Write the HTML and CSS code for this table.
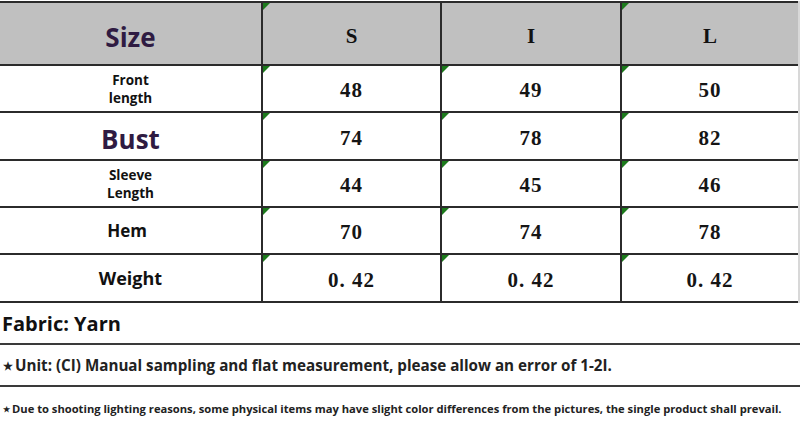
FILE: index.html
```html
<!DOCTYPE html>
<html>
<head>
<meta charset="utf-8">
<link rel="stylesheet" href="styles.css">
</head>
<body>
<div class="chart">
  <div class="cell head label"><span class="big size">Size</span></div>
  <div class="cell head mark"><span class="sz">S</span></div>
  <div class="cell head"><span class="sz">I</span></div>
  <div class="cell head mark"><span class="sz">L</span></div>

  <div class="cell label"><span class="small">Front<br>length</span></div>
  <div class="cell num mark">48</div>
  <div class="cell num mark">49</div>
  <div class="cell num mark">50</div>

  <div class="cell label"><span class="big bust">Bust</span></div>
  <div class="cell num mark">74</div>
  <div class="cell num mark">78</div>
  <div class="cell num mark">82</div>

  <div class="cell label"><span class="small">Sleeve<br>Length</span></div>
  <div class="cell num mark">44</div>
  <div class="cell num mark">45</div>
  <div class="cell num mark">46</div>

  <div class="cell label"><span class="mid">Hem</span></div>
  <div class="cell num mark">70</div>
  <div class="cell num mark">74</div>
  <div class="cell num mark">78</div>

  <div class="cell label"><span class="mid2">Weight</span></div>
  <div class="cell num mark">0. 42</div>
  <div class="cell num mark">0. 42</div>
  <div class="cell num mark">0. 42</div>
</div>
<div class="notes">
  <div class="note fabric">Fabric: Yarn</div>
  <div class="note unit"><span class="star">★</span>Unit: (CI) Manual sampling and flat measurement, please allow an error of 1-2I.</div>
  <div class="note tip"><span class="star">★</span>Due to shooting lighting reasons, some physical items may have slight color differences from the pictures, the single product shall prevail.</div>
</div>
</body>
</html>
```

FILE: styles.css
```css
html, body {
  margin: 0;
  padding: 0;
  background: #ffffff;
}
body {
  width: 800px;
  height: 425px;
  overflow: hidden;
  font-family: "Open Sans", "Noto Sans", sans-serif;
}
.chart {
  width: 798px;
  margin-top: 1px;
  display: grid;
  grid-template-columns: 261px 177px 178px 176px;
  grid-template-rows: 61px 45px 46px 45px 45px 46px;
  gap: 2px;
  padding: 2px 0;
  background: #2b2b2b;
  border-right: 2px solid #d8d8d8;
}
.cell {
  background: #ffffff;
  display: flex;
  align-items: center;
  justify-content: center;
  position: relative;
  color: #111;
}
.cell.head {
  background: #c0c0c0;
}
.mark::before {
  content: "";
  position: absolute;
  left: 0;
  top: 0;
  width: 0;
  height: 0;
  border-top: 7px solid #1c7a1c;
  border-right: 7px solid transparent;
}
.label {
  justify-content: flex-start;
}
.label span {
  display: block;
  width: 262px;
  text-align: center;
  font-weight: 700;
  color: #111;
}
.label .big {
  font-size: 26px;
  color: #2f1b42;
  line-height: 1;
}
.label .size {
  margin-top: 6px;
}
.label .bust {
  margin-top: 6px;
}
.label .small {
  font-size: 13.5px;
  line-height: 18.5px;
  margin-top: 1px;
}
.label .mid {
  font-size: 17px;
  margin-left: -4px;
  margin-top: -1px;
}
.label .mid2 {
  font-size: 18px;
  margin-top: 0;
}
.sz {
  font-family: "Liberation Serif", "DejaVu Serif", serif;
  font-weight: 700;
  font-size: 21px;
  color: #111;
  margin-top: 5px;
}
.num {
  font-family: "Liberation Serif", "DejaVu Serif", serif;
  font-weight: 700;
  font-size: 21px;
  color: #151515;
  padding-top: 4px;
  letter-spacing: 1px;
}
.notes {
  width: 800px;
}
.note {
  display: flex;
  align-items: center;
  font-weight: 700;
  color: #1e1e1e;
  white-space: nowrap;
}
.star {
  font-size: 0.75em;
  margin-right: 2px;
}
.fabric {
  height: 40px;
  font-size: 20px;
  padding-left: 2px;
  color: #111;
  border-bottom: 2px solid #3a3a3a;
}
.unit {
  height: 40px;
  font-size: 15.2px;
  padding-left: 3px;
  color: #222;
  border-bottom: 2px solid #3a3a3a;
}
.tip {
  height: 42px;
  font-size: 11.2px;
  padding-left: 3px;
  color: #222;
}
```
